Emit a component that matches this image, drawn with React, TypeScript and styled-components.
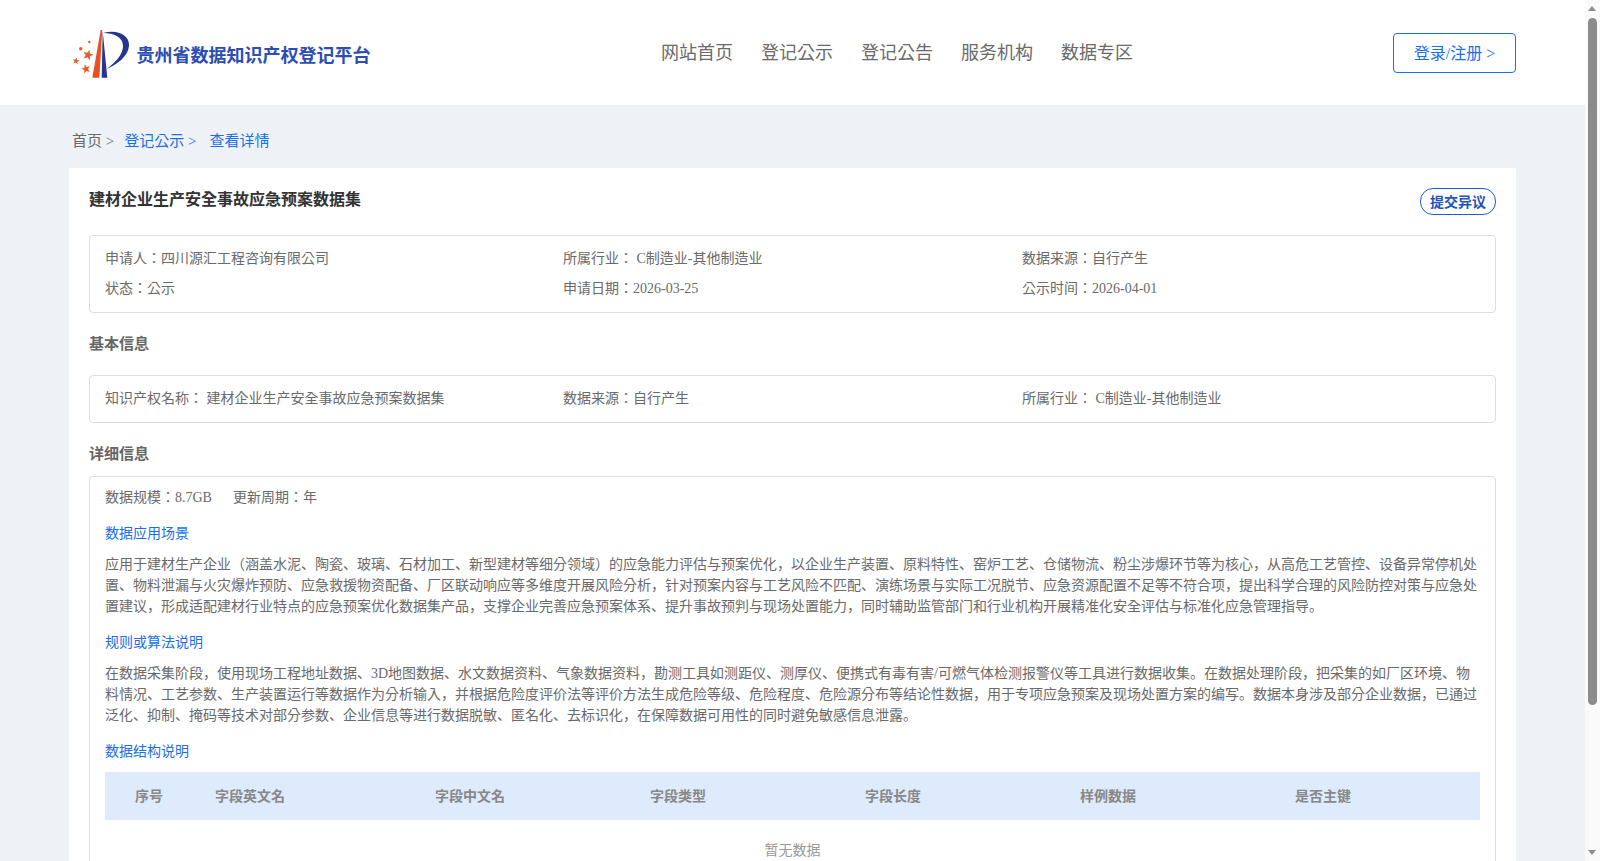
import React from "react";
import styled, { createGlobalStyle } from "styled-components";

const FONT = `"Liberation Serif", "Noto Sans CJK KR", serif`;

const Global = createGlobalStyle`
  html, body { margin: 0; padding: 0; }
  body { background: #eef2f6; font-family: ${FONT}; color: #6a6a6a; }
`;
const Page = styled.div`padding-right: 15px;`;
const Header = styled.header`
  height: 105px; background: #fff; display: flex; align-items: center; padding: 0 69px 0 70px;
`;
const Brand = styled.div`display: flex; align-items: center; gap: 6.5px; width: 591px;`;
const BrandName = styled.span`font-size: 18px; font-weight: 700; color: #2b4db5; margin-top: 3px;`;
const Nav = styled.nav`display: flex; gap: 28px; font-size: 18px; color: #6a6a6a; margin-top: -3px;`;
const LoginButton = styled.button`
  width: 123px; height: 40px; margin-left: auto; padding: 0 0 1px; border: 1px solid #1a6fe8; border-radius: 4px;
  background: #fff; color: #1a6fe8; font: 16px ${FONT};
`;
const Main = styled.main`padding: 0 69px;`;
const Crumbs = styled.div`height: 63px; padding: 6px 0 0 3px; display: flex; align-items: center; font-size: 15px; box-sizing: border-box;`;
const Crumb = styled.span<{ $active?: boolean; $gap: number }>`
  color: ${p => (p.$active ? "#1a6fe8" : "#6a6a6a")}; margin-right: ${p => p.$gap}px;
`;
const Card = styled.section`background: #fff; padding: 20px 20px 30px;`;
const TitleRow = styled.div`display: flex; justify-content: space-between; align-items: flex-start; margin-bottom: 20px;`;
const Title = styled.h1`margin: 0; font-size: 16px; line-height: 24px; font-weight: 700; color: #333;`;
const ObjectButton = styled.button`
  width: 76px; height: 27px; padding: 0 0 2px; border: 1px solid #1a5fd0; border-radius: 13px; background: #fff;
  color: #1e54b7; font: 700 14px ${FONT};
`;
const InfoBox = styled.div`
  border: 1px solid #ddd; border-radius: 4px; padding: 8px 15px; display: grid;
  grid-template-columns: 458px 459px 1fr; line-height: 30px; font-size: 14px;
`;
const Section = styled.h2<{ $tight?: boolean }>`
  margin: 0; font-size: 15px; line-height: 24px; font-weight: 700; color: #666;
  padding: 19px 0 ${p => (p.$tight ? 10 : 19)}px;
`;
const DetailBox = styled.div`border: 1px solid #ddd; border-radius: 4px; padding: 9px 15px 40px; font-size: 14px;`;
const Meta = styled.div`display: flex; gap: 21px; line-height: 24px; height: 22px;`;
const SubHead = styled.div`color: #1a6fe8; line-height: 24px; margin: 14px 0 8px;`;
const Para = styled.p`margin: 0; line-height: 21px;`;
const TableHead = styled.div`
  height: 48px; padding-bottom: 3px; box-sizing: border-box; background: #deebfc; display: grid; align-items: center;
  font-weight: 700; color: #888; grid-template-columns: 110px 220px repeat(4, 215px) 1fr;
`;
const HeadCell = styled.span<{ $first?: boolean }>`padding-left: ${p => (p.$first ? 30 : 0)}px;`;
const Empty = styled.div`text-align: center; color: #999; line-height: 21px; padding-top: 20px;`;

const ScrollTrack = styled.div`
  position: fixed; top: 0; right: 0; bottom: 0; width: 15px; background: #fafafa;
`;
const Thumb = styled.div`
  position: absolute; top: 18px; left: 3px; width: 9px; height: 687px; border-radius: 5px; background: #8c8c8c;
`;
const ArrowUp = styled.div`
  position: absolute; top: 6px; left: 3px; width: 0; height: 0;
  border-left: 4.5px solid transparent; border-right: 4.5px solid transparent; border-bottom: 5px solid #8c8c8c;
`;
const ArrowDown = styled.div`
  position: absolute; bottom: 6px; left: 3px; width: 0; height: 0;
  border-left: 4.5px solid transparent; border-right: 4.5px solid transparent; border-top: 5px solid #8c8c8c;
`;

const starPoints = (cx: number, cy: number, r: number, rot: number) =>
  Array.from({ length: 10 }, (_, i) => {
    const radius = i % 2 === 0 ? r : r * 0.42;
    const a = ((rot + i * 36 - 90) * Math.PI) / 180;
    return `${(cx + radius * Math.cos(a)).toFixed(2)},${(cy + radius * Math.sin(a)).toFixed(2)}`;
  }).join(" ");

const Logo = () => (
  <svg width="60" height="52" viewBox="0 0 60 52" aria-hidden="true">
    <path d="M33 6 C47 2 60 8 59 19 C58 30 46 38 36.7 42 C46 35 53 27 53 19 C53 10 44 6 33 6Z" fill="#26358f" />
    <path d="M32.7 4 L37.3 50.7 L31.7 50.7Z" fill="#26358f" />
    <path d="M30.7 3 L32.3 3 L29.3 50.7 L22.3 50.7Z" fill="#e8501f" />
    <g fill="#ea5a28">
      <polygon points={starPoints(18, 28, 5.5, 15)} />
      <polygon points={starPoints(16, 42, 4.8, -15)} />
      <polygon points={starPoints(6, 34, 3.6, 10)} />
      <circle cx="10.7" cy="21.7" r="1.7" />
      <circle cx="19.3" cy="15" r="1.2" />
    </g>
  </svg>
);

const fields = ["字段英文名", "字段中文名", "字段类型", "字段长度", "样例数据", "是否主键"];

export default function App() {
  return (
    <Page>
      <Global />
      <Header>
        <Brand><Logo /><BrandName>贵州省数据知识产权登记平台</BrandName></Brand>
        <Nav>{["网站首页", "登记公示", "登记公告", "服务机构", "数据专区"].map(n => <span key={n}>{n}</span>)}</Nav>
        <LoginButton>登录/注册 &gt;</LoginButton>
      </Header>
      <Main>
        <Crumbs>
          <Crumb $gap={10}>首页 &gt;</Crumb>
          <Crumb $active $gap={13}>登记公示 &gt;</Crumb>
          <Crumb $active $gap={0}>查看详情</Crumb>
        </Crumbs>
        <Card>
          <TitleRow>
            <Title>建材企业生产安全事故应急预案数据集</Title>
            <ObjectButton>提交异议</ObjectButton>
          </TitleRow>
          <InfoBox>
            <span>申请人：四川源汇工程咨询有限公司</span>
            <span>所属行业： C制造业-其他制造业</span>
            <span>数据来源：自行产生</span>
            <span>状态：公示</span>
            <span>申请日期：2026-03-25</span>
            <span>公示时间：2026-04-01</span>
          </InfoBox>
          <Section>基本信息</Section>
          <InfoBox>
            <span>知识产权名称： 建材企业生产安全事故应急预案数据集</span>
            <span>数据来源：自行产生</span>
            <span>所属行业： C制造业-其他制造业</span>
          </InfoBox>
          <Section $tight>详细信息</Section>
          <DetailBox>
            <Meta><span>数据规模：8.7GB</span><span>更新周期：年</span></Meta>
            <SubHead>数据应用场景</SubHead>
            <Para>应用于建材生产企业（涵盖水泥、陶瓷、玻璃、石材加工、新型建材等细分领域）的应急能力评估与预案优化，以企业生产装置、原料特性、窑炉工艺、仓储物流、粉尘涉爆环节等为核心，从高危工艺管控、设备异常停机处置、物料泄漏与火灾爆炸预防、应急救援物资配备、厂区联动响应等多维度开展风险分析，针对预案内容与工艺风险不匹配、演练场景与实际工况脱节、应急资源配置不足等不符合项，提出科学合理的风险防控对策与应急处置建议，形成适配建材行业特点的应急预案优化数据集产品，支撑企业完善应急预案体系、提升事故预判与现场处置能力，同时辅助监管部门和行业机构开展精准化安全评估与标准化应急管理指导。</Para>
            <SubHead>规则或算法说明</SubHead>
            <Para>在数据采集阶段，使用现场工程地址数据、3D地图数据、水文数据资料、气象数据资料，勘测工具如测距仪、测厚仪、便携式有毒有害/可燃气体检测报警仪等工具进行数据收集。在数据处理阶段，把采集的如厂区环境、物料情况、工艺参数、生产装置运行等数据作为分析输入，并根据危险度评价法等评价方法生成危险等级、危险程度、危险源分布等结论性数据，用于专项应急预案及现场处置方案的编写。数据本身涉及部分企业数据，已通过泛化、抑制、掩码等技术对部分参数、企业信息等进行数据脱敏、匿名化、去标识化，在保障数据可用性的同时避免敏感信息泄露。</Para>
            <SubHead>数据结构说明</SubHead>
            <TableHead>
              <HeadCell $first>序号</HeadCell>
              {fields.map(f => <HeadCell key={f}>{f}</HeadCell>)}
            </TableHead>
            <Empty>暂无数据</Empty>
          </DetailBox>
        </Card>
      </Main>
      <ScrollTrack>
        <ArrowUp />
        <Thumb />
        <ArrowDown />
      </ScrollTrack>
    </Page>
  );
}
